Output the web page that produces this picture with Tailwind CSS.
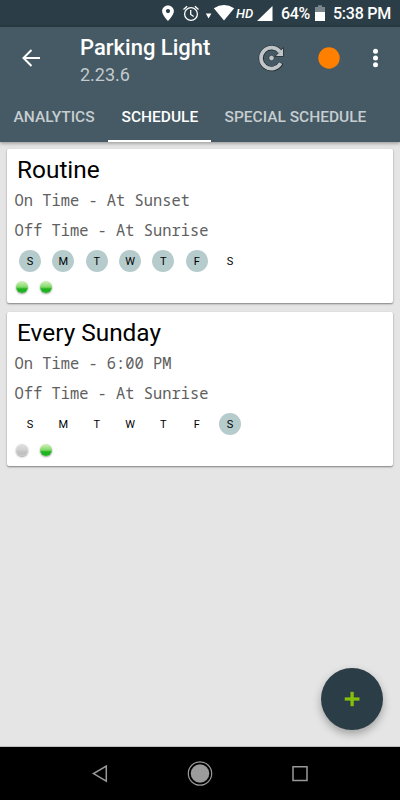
<!DOCTYPE html>
<html lang="en">
<head>
    <meta charset="UTF-8">
    <meta name="viewport" content="width=device-width, initial-scale=1.0">
    <title>Parking Light - Schedule</title>
    <script src="https://cdn.jsdelivr.net/npm/@tailwindcss/browser@4"></script>
</head>
<body class="w-[400px] h-[800px] overflow-hidden flex flex-col bg-[#e5e5e5] font-[Roboto,sans-serif]">
    <!-- Status bar -->
    <div class="h-[27px] shrink-0 bg-[#2b3d46] text-white flex items-center justify-end pr-[9px]">
        <svg class="w-[107px] h-[27px] shrink-0" viewBox="0 0 107 27">
            <path fill="#fff" fill-rule="evenodd" d="M3 5.500c-3.300 0-5.900 2.500-5.900 5.600 0 4.200 5.900 10 5.900 10s5.900-5.800 5.900-10c0-3.100-2.600-5.600-5.900-5.600zm0 3.500a2.100 2.100 0 1 1 0 4.200a2.100 2.100 0 0 1 0-4.200z" transform="translate(5 0)"/>
            <g fill="none" stroke="#fff" stroke-width="1.300" transform="translate(1 0)">
                <circle cx="30" cy="14" r="6.400"/>
                <path d="M29.700 10v4.500l3 2M22.500 9.500l3.600-3.300M37.500 9.500l-3.600-3.300"/>
            </g>
            <path fill="#fff" d="M44.500 13.500h5.600l-2.800 5zM52.500 8.300q10.200-6.800 20.400 0L62.700 20.500z" transform="translate(1.300 0)"/>
        </svg>
        <span class="-ml-[31px] w-[21px] text-[13px] leading-[27px] font-medium italic">HD</span>
        <svg class="w-[16px] h-[27px] shrink-0" viewBox="0 0 16 27">
            <path fill="#fff" d="M15.500 6v15H0z"/>
        </svg>
        <span class="ml-[8px] w-[34px] text-[16px] leading-[29px] font-medium tracking-[-0.3px]">64%</span>
        <svg class="w-[10px] h-[27px] shrink-0" viewBox="0 0 10 27">
            <path fill="#7b878d" d="M0 7h3V5.200h4V7h3v5H0z"/>
            <path fill="#fff" d="M0 12h10v9H0z"/>
        </svg>
        <span class="ml-[8px] w-[58px] whitespace-nowrap text-[16px] leading-[29px] font-medium tracking-[-0.25px]">5:38 PM</span>
    </div>

    <!-- App bar -->
    <header class="relative z-10 h-[115px] shrink-0 bg-[#455a64] shadow-[0_1px_4px_rgba(0,0,0,0.4)] flex flex-col">
        <div class="h-[63px] flex items-center">
            <svg class="w-[80px] h-[63px]" viewBox="0 0 80 63" fill="none" stroke="#fff" stroke-width="2">
                <path d="M40 31H24M31.500 23l-8 8 8 8"/>
            </svg>
            <div class="w-[173px] pt-[3px]">
                <h1 class="text-[22px] leading-[28px] font-medium text-white whitespace-nowrap">Parking Light</h1>
                <p class="text-[18px] leading-[25px] text-[#c3cacd]">2.23.6</p>
            </div>
            <svg class="w-[147px] h-[63px]" viewBox="0 0 147 63">
                <path fill="none" stroke="#1d262b" stroke-width="5" d="M28.100 35.900A10.500 10.500 0 1 1 26 23.800"/>
                <path fill="#c0c6c8" stroke="#1d262b" stroke-width=".8" d="M30.500 20.500v9h-8.500z"/>
                <path fill="none" stroke="#c0c6c8" stroke-width="3.700" d="M27.700 36.200A10.500 10.500 0 1 1 27 25"/>
                <circle cx="18.500" cy="31" r="2.700" fill="#c0c6c8" stroke="#1d262b" stroke-width=".6"/>
                <circle cx="76" cy="31" r="10.700" fill="#ff8000"/>
                <g fill="#fff">
                    <circle cx="122.500" cy="24.300" r="2.500"/>
                    <circle cx="122.500" cy="31" r="2.500"/>
                    <circle cx="122.500" cy="37.700" r="2.500"/>
                </g>
            </svg>
        </div>
        <nav class="h-[52px] flex text-[15.5px] leading-[54px] font-medium text-[#c7cdd0] whitespace-nowrap">
            <div class="w-[108px] pl-[13.5px]">ANALYTICS</div>
            <div class="w-[103px] pl-[13.5px] text-white border-b-2 border-white">SCHEDULE</div>
            <div class="pl-[13.5px]">SPECIAL SCHEDULE</div>
        </nav>
    </header>

    <!-- Schedule list -->
    <main class="flex-1 px-[7px] pt-[7px] flex flex-col gap-[9px]">
        <section class="h-[154px] bg-white rounded-[2px] shadow-[0_1px_2px_rgba(0,0,0,0.45)]">
            <h2 class="pl-[10px] pt-[5px] text-[24.4px] leading-[32px] text-black">Routine</h2>
            <div class="pl-[7.5px] font-['Noto_Sans_Mono','DejaVu_Sans_Mono',monospace] text-[15.4px] leading-[30px] text-[#606060] whitespace-nowrap">
                <p>On Time - At Sunset</p>
                <p>Off Time - At Sunrise</p>
            </div>
            <div class="pl-[12px] pt-[3.5px] flex gap-[11.35px] text-[11px] leading-[23px] text-center text-black">
                <span class="size-[22px] rounded-full bg-[#b5cbcc]">S</span>
                <span class="size-[22px] rounded-full bg-[#b5cbcc]">M</span>
                <span class="size-[22px] rounded-full bg-[#b5cbcc]">T</span>
                <span class="size-[22px] rounded-full bg-[#b5cbcc]">W</span>
                <span class="size-[22px] rounded-full bg-[#b5cbcc]">T</span>
                <span class="size-[22px] rounded-full bg-[#b5cbcc]">F</span>
                <span class="size-[22px]">S</span>
            </div>
            <div class="pl-[9px] pt-[9.5px] flex gap-[12px]">
                <span class="size-[12px] rounded-full bg-linear-to-b from-[#c4ecac] from-10% via-[#7fda68] via-50% to-[#1fb31f] to-65% shadow-[0_1px_2px_rgba(0,0,0,0.4)]"></span>
                <span class="size-[12px] rounded-full bg-linear-to-b from-[#c4ecac] from-10% via-[#7fda68] via-50% to-[#1fb31f] to-65% shadow-[0_1px_2px_rgba(0,0,0,0.4)]"></span>
            </div>
        </section>

        <section class="h-[154px] bg-white rounded-[2px] shadow-[0_1px_2px_rgba(0,0,0,0.45)]">
            <h2 class="pl-[10px] pt-[5px] text-[24.4px] leading-[32px] text-black">Every Sunday</h2>
            <div class="pl-[7.5px] font-['Noto_Sans_Mono','DejaVu_Sans_Mono',monospace] text-[15.4px] leading-[30px] text-[#606060] whitespace-nowrap">
                <p>On Time - 6:00 PM</p>
                <p>Off Time - At Sunrise</p>
            </div>
            <div class="pl-[12px] pt-[3.5px] flex gap-[11.35px] text-[11px] leading-[23px] text-center text-black">
                <span class="size-[22px]">S</span>
                <span class="size-[22px]">M</span>
                <span class="size-[22px]">T</span>
                <span class="size-[22px]">W</span>
                <span class="size-[22px]">T</span>
                <span class="size-[22px]">F</span>
                <span class="size-[22px] rounded-full bg-[#b5cbcc]">S</span>
            </div>
            <div class="pl-[9px] pt-[9.5px] flex gap-[12px]">
                <span class="size-[12px] rounded-full bg-linear-to-b from-[#dedede] from-10% via-[#d0d0d0] via-50% to-[#c2c2c2] to-65% shadow-[0_1px_2px_rgba(0,0,0,0.4)]"></span>
                <span class="size-[12px] rounded-full bg-linear-to-b from-[#c4ecac] from-10% via-[#7fda68] via-50% to-[#1fb31f] to-65% shadow-[0_1px_2px_rgba(0,0,0,0.4)]"></span>
            </div>
        </section>
    </main>

    <!-- Add button -->
    <button class="absolute left-[321px] top-[668px] size-[62px] rounded-full bg-[#2b3d46] shadow-[0_4px_9px_rgba(0,0,0,0.3)]">
        <svg class="size-[62px]" viewBox="0 0 62 62">
            <path fill="#84bf0b" stroke="#27344a" stroke-width=".6" d="M29.100 23.500h4v5.600h5.700v3.800h-5.700v5.600h-4v-5.600h-5.700v-3.800h5.700z"/>
        </svg>
    </button>

    <!-- Navigation bar -->
    <footer class="h-[54px] shrink-0 bg-black border-t border-[#b9bdbd]">
        <svg class="w-[400px] h-[53px]" viewBox="0 0 400 53" fill="none" stroke="#999" stroke-width="1.500">
            <path d="M106.300 19v15.200L93.500 26.600z"/>
            <circle cx="200" cy="26.500" r="11.700" stroke-width="1.200"/>
            <circle cx="200" cy="26.500" r="9.300" fill="#9b9b9b" stroke="none"/>
            <path d="M293 19.700h14v13.800h-14z"/>
        </svg>
    </footer>
</body>
</html>
